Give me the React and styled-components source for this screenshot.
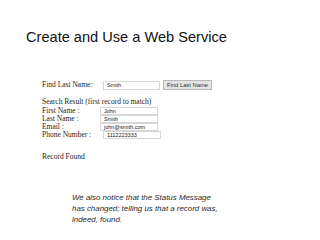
import React from "react";
import styled, { createGlobalStyle } from "styled-components";

const Global = createGlobalStyle`
  html, body { margin: 0; padding: 0; background: #ffffff; }
  body { width: 320px; height: 240px; overflow: hidden; }
`;

const Slide = styled.div`
  width: 320px;
  height: 240px;
  box-sizing: border-box;
  padding-top: 29px;
  display: flex;
  flex-direction: column;
  background: #ffffff;
`;

const Title = styled.h1`
  margin: 0 0 0 26px;
  font-family: "Liberation Sans", Arial, sans-serif;
  font-weight: normal;
  font-size: 14.6px;
  line-height: 17px;
  color: #111111;
`;

const Form = styled.div`
  margin: 34px 0 0 42px;
  display: flex;
  flex-direction: column;
  font-family: "Liberation Serif", "Times New Roman", serif;
  font-size: 7.5px;
  color: #1e1e1e;
`;

const FindRow = styled.div`
  display: flex;
  align-items: center;
  height: 10px;
`;

const Label = styled.span`
  width: ${(p) => p.$w}px;
  flex: none;
  line-height: 8px;
  white-space: nowrap;
`;

const Field = styled.div`
  box-sizing: border-box;
  width: ${(p) => p.$w}px;
  height: ${(p) => p.$h}px;
  border: 1px solid #d6d6d6;
  background: #ffffff;
  font-family: "Liberation Sans", Arial, sans-serif;
  font-size: 5.5px;
  line-height: ${(p) => p.$h - 2}px;
  padding-left: 3px;
  color: #222222;
  white-space: nowrap;
  overflow: hidden;
`;

const Button = styled.div`
  box-sizing: border-box;
  margin-left: 3px;
  width: 49px;
  height: 10px;
  border: 1px solid #b8b8b8;
  background: #e4e4e4;
  font-family: "Liberation Sans", Arial, sans-serif;
  font-size: 5.8px;
  line-height: 8px;
  text-align: center;
  color: #333333;
  white-space: nowrap;
`;

const SectionTitle = styled.div`
  margin-top: 7px;
  line-height: 9px;
  white-space: nowrap;
`;

const ResultRow = styled.div`
  display: flex;
  align-items: center;
  height: 8px;
  margin-top: ${(p) => (p.$first ? 1 : 0)}px;
`;

const Status = styled.div`
  margin-top: 13px;
  line-height: 9px;
`;

const Note = styled.p`
  margin: 31px 0 0 72px;
  font-family: "Liberation Sans", Arial, sans-serif;
  font-style: italic;
  font-size: 7.9px;
  line-height: 11px;
  color: #2a2a2a;
`;

const rows = [
  { label: "First Name :", value: "John", lw: 58 },
  { label: "Last Name :", value: "Smith", lw: 58 },
  { label: "Email :", value: "john@smith.com", lw: 58 },
  { label: "Phone Number :", value: "1112223333", lw: 61 },
];

export default function App() {
  return (
    <>
      <Global />
      <Slide>
        <Title>Create and Use a Web Service</Title>
        <Form>
          <FindRow>
            <Label $w={61}>Find Last Name:</Label>
            <Field $w={57} $h={9}>Smith</Field>
            <Button>Find Last Name</Button>
          </FindRow>
          <SectionTitle>Search Result (first record to match)</SectionTitle>
          {rows.map((r, i) => (
            <ResultRow key={r.label} $first={i === 0}>
              <Label $w={r.lw}>{r.label}</Label>
              <Field $w={58} $h={8}>{r.value}</Field>
            </ResultRow>
          ))}
          <Status>Record Found</Status>
        </Form>
        <Note>
          We also notice that the Status Message
          <br />
          has changed; telling us that a record was,
          <br />
          indeed, found.
        </Note>
      </Slide>
    </>
  );
}
